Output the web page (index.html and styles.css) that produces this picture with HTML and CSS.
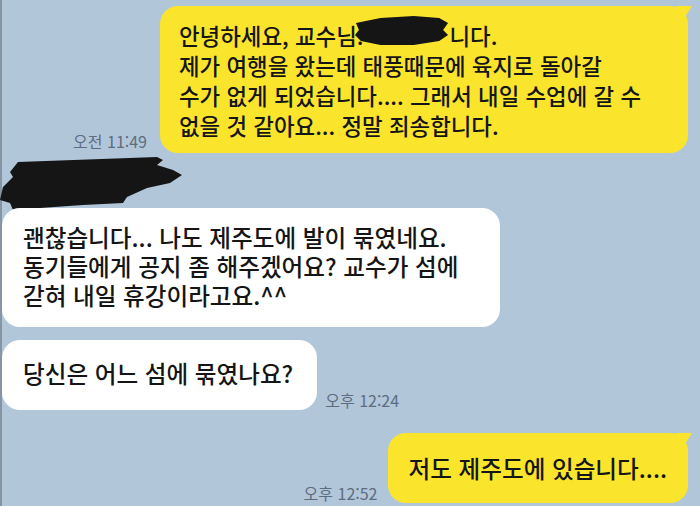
FILE: index.html
```html
<!DOCTYPE html>
<html lang="ko">
<head>
    <meta charset="UTF-8">
    <meta name="viewport" content="width=device-width, initial-scale=1.0">
    <title>채팅</title>
    <link rel="stylesheet" href="styles.css">
</head>
<body>
    <main class="chat">
        <div class="row row-me">
            <span class="time time-first">오전 11:49</span>
            <div class="bubble bubble-me bubble-long">
                안녕하세요, 교수님.<span class="redact"><svg viewBox="0 0 96 31" preserveAspectRatio="none"><polygon points="1,8 26,3 60,1 86,3 95,8 90,15 95,20 86,26 60,30 26,30 6,26 0,20 4,15"/></svg></span>니다.<br>
                제가 여행을 왔는데 태풍때문에 육지로 돌아갈<br>
                수가 없게 되었습니다.... 그래서 내일 수업에 갈 수<br>
                없을 것 같아요... 정말 죄송합니다.
            </div>
        </div>

        <div class="sender">
            <svg viewBox="0 0 185 52"><polygon points="18,6 157,1 163,4 157,9 173,14 182,19 170,27 147,32 127,41 123,47 83,49 40,52 13,54 10,47 0,44 3,31 13,21 10,16"/></svg>
        </div>

        <div class="row row-them">
            <div class="bubble bubble-them bubble-reply">
                괜찮습니다... 나도 제주도에 발이 묶였네요.<br>
                동기들에게 공지 좀 해주겠어요? 교수가 섬에<br>
                갇혀 내일 휴강이라고요.^^
            </div>
        </div>

        <div class="row row-them row-question">
            <div class="bubble bubble-them bubble-short">당신은 어느 섬에 묶였나요?</div>
            <span class="time">오후 12:24</span>
        </div>

        <div class="row row-me row-last">
            <span class="time">오후 12:52</span>
            <div class="bubble bubble-me bubble-short">저도 제주도에 있습니다....</div>
        </div>
    </main>
</body>
</html>
```

FILE: styles.css
```css
body {
    margin: 0;
    padding: 0;
    height: 506px;
    overflow: hidden;
    background-color: #b2c6da;
    font-family: "Noto Sans CJK KR", "Noto Sans", sans-serif;
    color: #151515;
}

.chat {
    display: flex;
    flex-direction: column;
    height: 506px;
    padding: 6px 12px 0 0;
    border-left: 2px solid #8694a3;
    box-sizing: border-box;
}

.row {
    display: flex;
    align-items: flex-end;
}

.row-me {
    justify-content: flex-end;
    gap: 13px;
}

.row-them {
    gap: 8px;
}

.row-question {
    margin-top: 13px;
}

.row-last {
    margin-top: 23px;
    gap: 10px;
}

.bubble {
    position: relative;
    font-size: 23.6px;
    font-weight: 500;
    line-height: 30px;
    border-radius: 18px;
    box-sizing: border-box;
    white-space: nowrap;
}

.bubble-me {
    background-color: #fbe52c;
}

.bubble-me::after {
    content: '';
    position: absolute;
    top: 0;
    right: -4px;
    width: 16px;
    height: 14px;
    background-color: #fbe52c;
    clip-path: polygon(0 0, 100% 0, 45% 100%, 0 100%);
}

.bubble-them {
    background-color: #ffffff;
}

.bubble-long {
    width: 528px;
    padding: 14px 18px 13px 19px;
    font-size: 22.4px;
}

.bubble-reply {
    width: 498px;
    padding: 15px 21px 17px;
    line-height: 29px;
}

.bubble-short {
    padding: 18px 24px 22px 21px;
}

.row-last .bubble-short {
    padding: 20px 21px;
}

.redact {
    display: inline-block;
    vertical-align: top;
    width: 94px;
    height: 31px;
    margin: -5px 0 0 -8px;
}

.redact svg,
.sender svg {
    display: block;
    width: 100%;
    height: 100%;
    fill: #151515;
    overflow: visible;
}

.sender {
    width: 185px;
    height: 52px;
    margin: 3px 0 0 -2px;
}

.time {
    font-size: 16px;
    line-height: 18px;
    color: #5c6d80;
    white-space: nowrap;
    margin-bottom: 1px;
}

.time-first {
    margin-bottom: 3px;
}
```
